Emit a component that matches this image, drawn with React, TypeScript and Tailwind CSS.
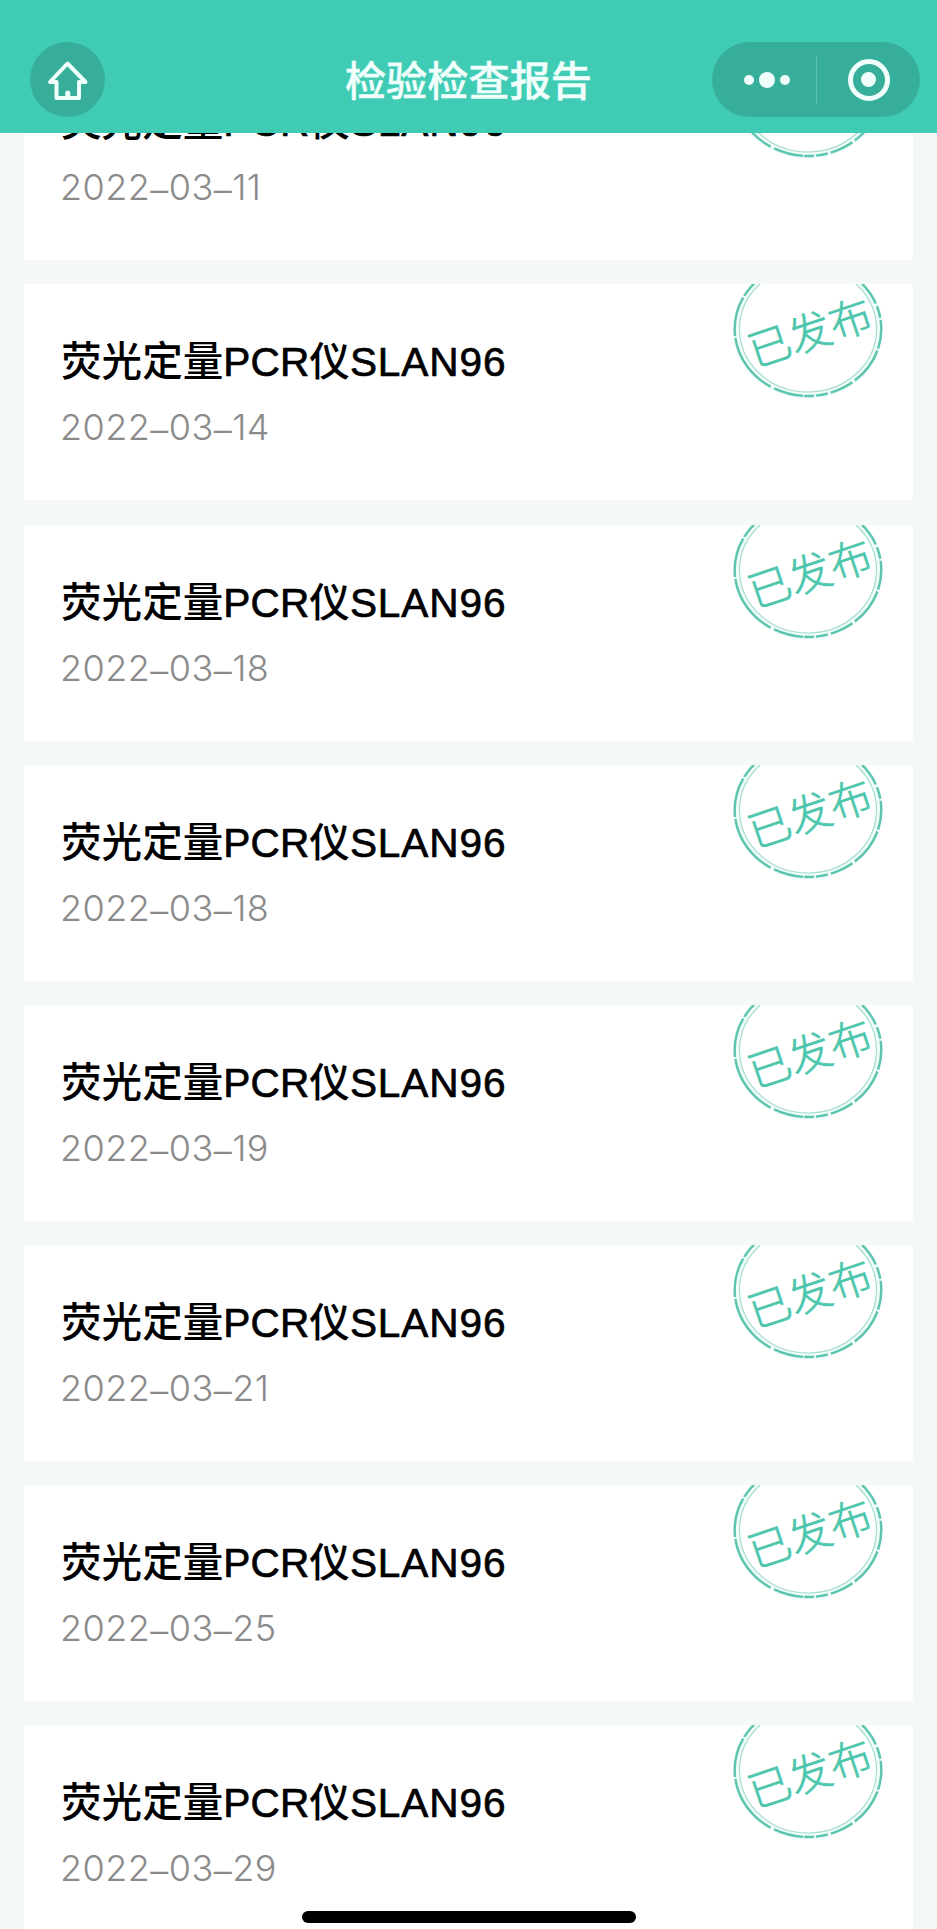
const reports = [
  "2022–03–11",
  "2022–03–14",
  "2022–03–18",
  "2022–03–18",
  "2022–03–19",
  "2022–03–21",
  "2022–03–25",
  "2022–03–29",
];

function HomeIcon() {
  return (
    <svg width="44" height="44" viewBox="0 0 44 44" fill="none" stroke="#f0fffc" strokeWidth="4" strokeLinecap="round" strokeLinejoin="round">
      <path d="M10.500 24H4L21.500 5.500L39.500 24H33V40H10.500V24" />
      <path d="M21.800 35V38" strokeWidth="5" />
    </svg>
  );
}

function Stamp() {
  return (
    <svg className="absolute top-0 right-[28px]" width="156" height="120" viewBox="0 0 156 120" fill="none">
      <ellipse cx="79" cy="45" rx="71.500" ry="66" stroke="#effcf8" strokeWidth="7" />
      <ellipse cx="79" cy="45" rx="73.300" ry="67" stroke="#5cc4af" strokeWidth="2.400" strokeDasharray="20 2 38 3 24 3 12 2 10 1 30 4 62 2 40 2 70 2" />
      <ellipse cx="79" cy="45" rx="68.500" ry="63" stroke="#a9dccf" strokeWidth="1.200" />
      <g transform="translate(81 48.500) rotate(-18.500)">
        <text x="0" y="15.500" textAnchor="middle" fill="#4cc6ad" stroke="#4cc6ad" strokeWidth="0.700" className="font-['Noto_Sans_CJK_SC',sans-serif] text-[42.500px] font-light">
          已发布
        </text>
      </g>
    </svg>
  );
}

function ReportDate({ value }: { value: string }) {
  return (
    <p className="mt-[12px] -ml-px h-[46px] text-[36px] leading-[47px] font-light tracking-[0.450px] whitespace-nowrap text-[#8a8a8a]">
      {value.split("–").map((part, i) => (
        <span key={i}>
          {i > 0 && <span className="align-[-2.500px] leading-none">–</span>}
          {part}
        </span>
      ))}
    </p>
  );
}

function ReportCard({ date }: { date: string }) {
  return (
    <article className="relative h-[216px] shrink-0 overflow-hidden bg-white pt-[50px] pl-[37px]">
      <h2 className="mb-[14px] h-[56px] text-[40.600px] leading-[56px] font-medium whitespace-nowrap text-black">
        荧光定量
        <span className="font-['Liberation_Sans',sans-serif] font-normal tracking-[0.100px] [-webkit-text-stroke:0.700px_black]">PCR</span>
        仪
        <span className="font-['Liberation_Sans',sans-serif] font-normal tracking-[0.900px] [-webkit-text-stroke:0.700px_black]">SLAN96</span>
      </h2>
      <ReportDate value={date} />
      <Stamp />
    </article>
  );
}

export default function App() {
  return (
    <div className="relative flex h-[1929px] w-[937px] flex-col overflow-hidden bg-[#f4f8f7] font-['Inter','Noto_Sans_CJK_SC',sans-serif]">
      <header className="grid h-[132.500px] shrink-0 grid-cols-[1fr_auto_1fr] items-start bg-[#40ccb4] pt-[42px] pr-[17px] pl-[30px]">
        <button className="flex size-[75px] items-center justify-center rounded-full bg-[#36ae99]">
          <HomeIcon />
        </button>
        <h1 className="pt-[2px] pr-[13px] text-[41.200px] leading-[75px] font-medium text-[#f0fffc] [-webkit-text-stroke:0.400px_#f0fffc]">检验检查报告</h1>
        <div className="flex h-[75px] w-[208px] items-center justify-self-end rounded-full bg-[#36ae99]">
          <div className="flex w-[104px] items-center justify-center gap-[5px] pl-[5px]">
            <span className="size-[10px] rounded-full bg-[#f0fffc]" />
            <span className="size-[16px] rounded-full bg-[#f0fffc]" />
            <span className="size-[10px] rounded-full bg-[#f0fffc]" />
          </div>
          <div className="h-[48px] w-px bg-[#5abfad]" />
          <div className="flex flex-1 items-center justify-center">
            <span className="flex size-[42px] items-center justify-center rounded-full border-[5px] border-[#f0fffc]">
              <span className="size-[15px] rounded-full bg-[#f0fffc]" />
            </span>
          </div>
        </div>
      </header>
      <main className="min-h-0 flex-1 overflow-hidden pr-[24px] pl-[24px]">
        <div className="-mt-[88.300px] flex flex-col gap-[24.170px]">
          {reports.map((date, i) => (
            <ReportCard key={i} date={date} />
          ))}
        </div>
      </main>
      <div className="absolute bottom-[6px] left-[302px] h-[12px] w-[334px] rounded-full bg-black" />
    </div>
  );
}
